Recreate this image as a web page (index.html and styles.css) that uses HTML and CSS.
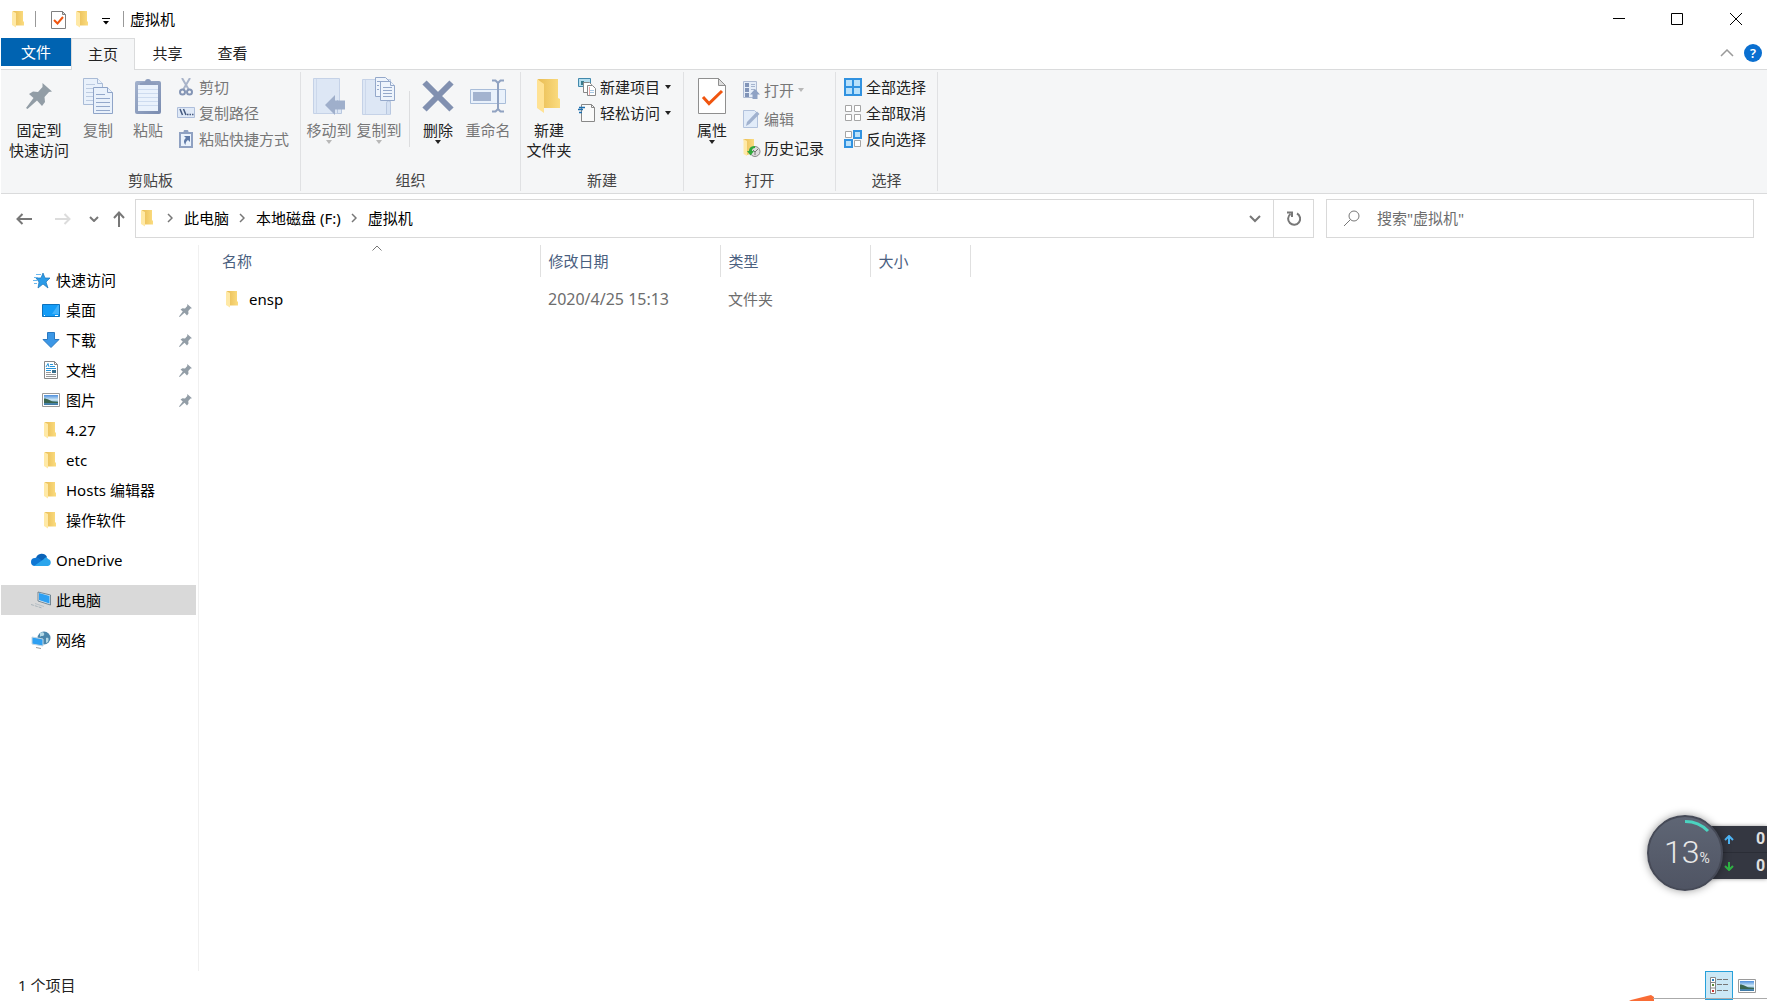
FILE: index.html
```html
<!DOCTYPE html>
<html lang="zh-CN">
<head>
<meta charset="utf-8">
<title>虚拟机</title>
<link rel="stylesheet" href="styles.css">
</head>
<body>
<svg class="defs" aria-hidden="true">
  <defs>
    <linearGradient id="gFold" x1="0" y1="0" x2="1" y2="0"><stop offset="0" stop-color="#e9bd55"/><stop offset="1" stop-color="#fbdc80"/></linearGradient>
    <linearGradient id="gSky" x1="0" y1="0" x2="0" y2="1"><stop offset="0" stop-color="#4e8fdc"/><stop offset=".5" stop-color="#d4ecf8"/><stop offset=".7" stop-color="#5a93ac"/><stop offset="1" stop-color="#3a77a8"/></linearGradient>
    <linearGradient id="gClip" x1="0" y1="0" x2="1" y2="1"><stop offset="0" stop-color="#a3b2cd"/><stop offset="1" stop-color="#7a8cb0"/></linearGradient>
    <linearGradient id="gBall" x1="0" y1="0" x2="0" y2="1"><stop offset="0" stop-color="#5f6675"/><stop offset="1" stop-color="#4f5463"/></linearGradient>
  </defs>
  <symbol id="folder" viewBox="0 0 18 18"><path d="M3 1H13v10.500h1V15.500H5z" fill="url(#gFold)"/><path d="M2 1l4 2v14.500L2 15z" fill="#ffe9a6"/></symbol>
  <symbol id="pin" viewBox="0 0 26 26"><path d="M16.500 0L26 8.500l-3 .5-4.500 5 .5 5-3 4-5-5.500L1.500 26 0 25 7.500 15 3 11l4-2.500 5 .5 4.500-5z" fill="#929da6"/></symbol>
  <symbol id="picture" viewBox="0 0 18 14"><path d="M.5.500h17v13H.500z" fill="#fff" stroke="#9a9a9a"/><path d="M2 2h14v10H2z" fill="url(#gSky)"/><path d="M2 5.500c4 0 6 2.500 9 3l5 .5v1H2z" fill="#3b6650"/></symbol>
  <symbol id="crumb" viewBox="0 0 6 10"><path d="M1 1l4 4-4 4" fill="none" stroke="#777" stroke-width="1.500"/></symbol>
</svg>

<header class="titlebar">
  <svg class="i18"><use href="#folder"/></svg>
  <span class="bar"></span>
  <button class="quick props" aria-label="属性"><svg width="15" height="18"><path d="M.5.500h11l3 3v14H.500z" fill="#fff" stroke="#808080"/><path d="M11.500.500v3h3z" fill="#ddd" stroke="#808080"/><path d="M3 9l3.500 3.500L12 6" fill="none" stroke="#f0550f" stroke-width="2"/></svg></button>
  <button class="quick" aria-label="新建文件夹"><svg class="i18"><use href="#folder"/></svg></button>
  <button class="quick more" aria-label="自定义快速访问工具栏"><svg width="8" height="7"><path d="M0 .5h8" stroke="#000"/><path d="M1 3h6L4 6.500z"/></svg></button>
  <span class="bar"></span>
  <h1>虚拟机</h1>
  <div class="wincontrols">
    <button aria-label="最小化"><svg width="12" height="12"><path d="M0 5.500h12" stroke="#000"/></svg></button>
    <button aria-label="最大化"><svg width="12" height="12"><path d="M.5.500h11v11H.500z" fill="none" stroke="#000"/></svg></button>
    <button aria-label="关闭"><svg width="12" height="12"><path d="M0 0l12 12M12 0L0 12" stroke="#000"/></svg></button>
  </div>
</header>

<nav class="tabs">
  <button class="tab file">文件</button>
  <button class="tab active">主页</button>
  <button class="tab">共享</button>
  <button class="tab">查看</button>
  <div class="help">
    <button aria-label="最小化功能区"><svg width="14" height="8"><path d="M1 7l6-6 6 6" fill="none" stroke="#9a9a9a" stroke-width="1.500"/></svg></button>
    <button class="ask" aria-label="帮助">?</button>
  </div>
</nav>

<section class="ribbon">
  <div class="group clip">
    <div class="tools">
      <button class="big wide"><span class="pic"><svg width="26" height="26"><use href="#pin"/></svg></span>固定到<br>快速访问</button>
      <button class="big" disabled><span class="pic"><svg width="30" height="36"><g fill="#e9f1fb" stroke="#a9bbd6"><path d="M.500.500h14l5 5v21H.500z"/><path d="M14.500.500v5h5"/><path d="M3 6.500h9M3 10.500h13M3 14.500h7M3 18.500h7M3 22.500h7" stroke="#bccbe1"/><path d="M10.500 9.500h14l5 5v21h-19z" stroke="#8fa4c8"/><path d="M24.500 9.500v5h5" stroke="#8fa4c8"/><path d="M13 16.500h9M13 20.500h14M13 24.500h14M13 28.500h14M13 32.500h14" stroke="#93a8cb"/></g></svg></span>复制</button>
      <button class="big" disabled><span class="pic"><svg width="26" height="36"><rect y="3" width="26" height="33" rx="2" fill="url(#gClip)"/><path d="M3 7h20v26H3z" fill="#eaf2fc"/><path d="M3 11.500h20M3 15.500h20M3 19.500h20M3 23.500h20M3 27.500h20" stroke="#cddbef"/><path d="M5 7V5l5-1a3 3 0 0 1 6 0l5 1v2z" fill="#8c9cbc"/></svg></span>粘贴</button>
      <div class="small">
        <button disabled><svg class="i18" viewBox="0 0 18 18"><path d="M5 0l7 12M13 0L6 12" stroke="#a9b4c9" stroke-width="2"/><g fill="none" stroke="#8495b5" stroke-width="2"><circle cx="5.500" cy="14" r="2.500"/><circle cx="12.500" cy="14" r="2.500"/></g></svg>剪切</button>
        <button disabled><svg class="i18" viewBox="0 0 18 18"><path d="M.5 3.500h17v10H.500z" fill="#dfe9f7" stroke="#aebedb"/><path d="M3 5l2.500 6M6.500 5L9 11M10 10.500h1.500M12.500 10.500H14M15 10.500h1.500" stroke="#44597f" stroke-width="1.500"/></svg>复制路径</button>
        <button disabled><svg class="i18" viewBox="0 0 18 18"><path d="M2 2h4.500a2.500 2.500 0 0 1 5 0H16v16H2z" fill="#8fa1c2"/><path d="M4 4h10v12H4z" fill="#eaf2fc"/><path d="M7 6h6v6l-2-2c-2 1-2.500 3-2.500 5C6 12 7 9.500 9 8z" fill="#5f7aa8"/></svg>粘贴快捷方式</button>
      </div>
    </div>
    <h2>剪贴板</h2>
  </div>

  <div class="group org">
    <div class="tools">
      <button class="big" disabled><span class="pic"><svg width="32" height="37"><path d="M.5.500h26v35H.500z" fill="#dde7f5" stroke="#c5d2e7"/><path d="M3.500 1v34" stroke="#ccd8eb"/><path d="M24.500 22v13.500h4V24" fill="#dde7f5" stroke="#b9c8e0"/><path d="M12 27l10-10v5.500h10v9H22V37z" fill="#9fafcb"/></svg></span>移动到<i class="arrow"></i></button>
      <button class="big" disabled><span class="pic"><svg width="34" height="38"><path d="M.5 2.500h28v35H.500z" fill="#dde7f5" stroke="#c5d2e7"/><path d="M3.500 3v34" stroke="#ccd8eb"/><path d="M24.500 37V26a2 2 0 0 1 4 0v11" fill="#d5e1f2" stroke="#b9c8e0"/><g fill="#eef4fc" stroke="#94a8ca"><path d="M13.500.500h10l4 4v15h-14z"/><path d="M18.500 4.500h10l4 4v15h-14z"/><path d="M28.500 4.500v4h4M21 10.500h9M21 13.500h9M21 16.500h9M21 19.500h9M15 4.500h4M15 8.500h2M15 12.500h2"/></g></svg></span>复制到<i class="arrow"></i></button>
      <span class="split"></span>
      <button class="big"><span class="pic"><svg width="32" height="32"><path d="M2.500 2.500l27 27M29.500 2.500l-27 27" stroke="#8190b0" stroke-width="6"/></svg></span>删除<i class="arrow"></i></button>
      <button class="big" disabled><span class="pic"><svg width="36" height="34"><path d="M.500 10.500h35v14H.500z" fill="#e9f1fb" stroke="#a9bdd9"/><path d="M3 13h18v9H3z" fill="#a3b3cf"/><path d="M22 1.500h3.500L28 4l2.500-2.500H34M28 3v27M22 32.500h3.500L28 30l2.500 2.500H34" fill="none" stroke="#90a2c1" stroke-width="2"/></svg></span>重命名</button>
    </div>
    <h2>组织</h2>
  </div>

  <div class="group create">
    <div class="tools">
      <button class="big"><span class="pic"><svg width="26" height="34"><path d="M2 0h20v19l2 1v9H8z" fill="url(#gFold)"/><path d="M1 0l7 5v29l-7-5z" fill="#ffe294"/></svg></span>新建<br>文件夹</button>
      <div class="small">
        <button><svg class="i18" viewBox="0 0 18 18"><path d="M.5.500h12v8H.500z" fill="#b5deef" stroke="#4289ac"/><path d="M3 3h3v4H3z" fill="#3a7b8d"/><path d="M5.500 4.500h6l2 2v8h-8z" fill="#fff" stroke="#888"/><path d="M9.500 7.500h5l3 3v7h-8z" fill="#fff" stroke="#888"/><path d="M11 12.500h5M11 14.500h5" stroke="#a8c8e4"/><path d="M11.500 9v8" stroke="#eaa"/></svg>新建项目<i class="arrow"></i></button>
        <button><svg class="i18" viewBox="0 0 18 18"><path d="M3.500.500h10l3 3v14h-13z" fill="#fafafa" stroke="#888"/><path d="M13.500.500v3h3" fill="none" stroke="#888"/><path d="M1 3.500h6M0 5.500h5M1 8.500h3" stroke="#1e6fae" stroke-width="1.500"/></svg>轻松访问<i class="arrow"></i></button>
      </div>
    </div>
    <h2>新建</h2>
  </div>

  <div class="group open">
    <div class="tools">
      <button class="big"><span class="pic"><svg width="28" height="36"><path d="M.5.500h20l7 7v28H.500z" fill="#fff" stroke="#8f8f8f"/><path d="M20.500.500v7h7z" fill="#ddd" stroke="#8f8f8f"/><path d="M5 19l6 6.500L24 13" fill="none" stroke="#f0550f" stroke-width="3"/></svg></span>属性<i class="arrow"></i></button>
      <div class="small loose">
        <button disabled><svg class="i18" viewBox="0 0 18 18"><path d="M.5.500h13v16H.500z" fill="#e5edf8" stroke="#aebbd3"/><path d="M2 2h4v4H2zM2 7h4v4H2zM2 12h4v4H2z" fill="#8194b8"/><path d="M8 3.500h4M8 5.500h4M8 8.500h4" stroke="#a5b4ce"/><path d="M12 8l5 5.500h-2.500V18h-5v-4.500H7z" fill="#8fa2c4"/></svg>打开<i class="arrow"></i></button>
        <button disabled><svg class="i18" viewBox="0 0 18 18"><path d="M.5.500h11l3 3v14H.500z" fill="#e2ecf9" stroke="#b2c2dc"/><path d="M3 16l1-4L14 1.500l2.500 2.500L6.500 14z" fill="#a1b2cf"/></svg>编辑</button>
        <button><svg class="i18" viewBox="0 0 18 18"><path d="M.500 0H11v14L4 16z" fill="url(#gFold)"/><path d="M.500 0L4 2v15L.500 15z" fill="#ffe9a6"/><circle cx="12" cy="12.500" r="5" fill="#ddd" stroke="#888"/><path d="M10 11l2 2 3-3M12 13v3" fill="none" stroke="#777"/><path d="M12 7c-5 0-6 3-6 5H4l3.500 4.500L11 12H9c0-2 1-3 3-3z" fill="#31a83c"/></svg>历史记录</button>
      </div>
    </div>
    <h2>打开</h2>
  </div>

  <div class="group choose">
    <div class="tools">
      <div class="small">
        <button><svg class="i18" viewBox="0 0 18 18"><path d="M1 1h16v16H1zM9 1v16M1 9h16" fill="#b9e1fb" stroke="#3192e0" stroke-width="2"/></svg>全部选择</button>
        <button><svg class="i18" viewBox="0 0 18 18"><path d="M1.500 1.500h6v6h-6zM10.500 1.500h6v6h-6zM1.500 10.500h6v6h-6zM10.500 10.500h6v6h-6z" fill="#fff" stroke="#a5a5a5"/></svg>全部取消</button>
        <button><svg class="i18" viewBox="0 0 18 18"><path d="M1.500 1.500h6v6h-6zM10.500 10.500h6v6h-6z" fill="#fff" stroke="#a5a5a5"/><path d="M10 1h7v7h-7zM1 10h7v7H1z" fill="#b9e1fb" stroke="#3192e0" stroke-width="2"/></svg>反向选择</button>
      </div>
    </div>
    <h2>选择</h2>
  </div>
</section>

<div class="address">
  <div class="history">
    <button aria-label="后退"><svg width="16" height="12"><path d="M16 6H1.500M6.500 1L1.500 6l5 5" fill="none" stroke="#777" stroke-width="2"/></svg></button>
    <button class="fwd" aria-label="前进" disabled><svg width="16" height="12"><path d="M0 6h14.500M9.500 1l5 5-5 5" fill="none" stroke="#dcdcdc" stroke-width="2"/></svg></button>
    <button class="recent" aria-label="最近位置"><svg width="10" height="6"><path d="M1 1l4 4 4-4" fill="none" stroke="#777" stroke-width="2"/></svg></button>
    <button aria-label="上移"><svg width="12" height="16"><path d="M6 16V1.500M1 7l5-5.500L11 7" fill="none" stroke="#777" stroke-width="2"/></svg></button>
  </div>
  <div class="path">
    <nav class="crumbs">
      <svg class="i18"><use href="#folder"/></svg>
      <svg class="sep"><use href="#crumb"/></svg><a href="#">此电脑</a>
      <svg class="sep"><use href="#crumb"/></svg><a href="#">本地磁盘 (F:)</a>
      <svg class="sep"><use href="#crumb"/></svg><a href="#">虚拟机</a>
    </nav>
    <button class="drop" aria-label="以前的位置"><svg width="12" height="8"><path d="M1 1l5 5 5-5" fill="none" stroke="#777" stroke-width="2"/></svg></button>
    <button class="refresh" aria-label="刷新"><svg width="14" height="15"><path d="M10 2.500A6 6 0 1 1 3.500 3M0 1.500h5V6" fill="none" stroke="#777" stroke-width="2"/></svg></button>
  </div>
  <label class="search">
    <svg width="16" height="16"><circle cx="10" cy="6" r="5" fill="none" stroke="#777"/><path d="M6.500 9.500L0 16" stroke="#777"/></svg>
    <input type="text" aria-label="搜索" placeholder="搜索&quot;虚拟机&quot;">
  </label>
</div>

<main>
  <nav class="side">
    <a href="#" class="root"><svg class="i18" viewBox="0 0 18 18"><path d="M10 2l2 5h5l-4 4 2 6-5-4-5 4 1-6-3-4h5z" fill="#2b9be8" stroke="#1873b8" stroke-width=".7"/><path d="M3 3.500h5M1 6.500h4M0 9.500h4M1 12.500h3" stroke="#6bb8ee"/></svg>快速访问</a>
    <a href="#"><svg class="i18" viewBox="0 0 18 18"><path d="M.5 3.500h17v12H.500z" fill="#139cf7" stroke="#0d72bd"/><path d="M10 13L16 4h1v9z" fill="#42b2fb"/><path d="M2 14.500h1M13 14.500h3" stroke="#fff"/></svg>桌面<svg class="mark"><use href="#pin"/></svg></a>
    <a href="#"><svg class="i18" viewBox="0 0 18 18"><path d="M5.500 1.500h7v7h4.500L9 16.500 1 8.500h4.500z" fill="#3b97e6" stroke="#2a78c0"/></svg>下载<svg class="mark"><use href="#pin"/></svg></a>
    <a href="#"><svg class="i18" viewBox="0 0 18 18"><path d="M2.500.500h10l3 3v14h-13z" fill="#fff" stroke="#888"/><path d="M12.500.500v3h3" fill="none" stroke="#888"/><path d="M4 6l2-3.500L7 6M8 3.500h3M8 5.500h5M4 7.500h10M4 9.500h5" fill="none" stroke="#2894d8"/><path d="M4 11.500h5M4 13.500h10M4 15.500h10" stroke="#999"/><path d="M10 9h4v3h-4z" fill="#386e8c"/></svg>文档<svg class="mark"><use href="#pin"/></svg></a>
    <a href="#"><svg class="i18" viewBox="0 0 18 14"><use href="#picture"/></svg>图片<svg class="mark"><use href="#pin"/></svg></a>
    <a href="#"><svg class="i18"><use href="#folder"/></svg>4.27</a>
    <a href="#"><svg class="i18"><use href="#folder"/></svg>etc</a>
    <a href="#"><svg class="i18"><use href="#folder"/></svg>Hosts 编辑器</a>
    <a href="#"><svg class="i18"><use href="#folder"/></svg>操作软件</a>
    <a href="#" class="root top"><svg class="i20" viewBox="0 0 20 18"><path d="M5 7a6 6 0 0 1 11-1l-4 6z" fill="#0a63b8"/><path d="M4 15a4 4 0 0 1 0-8c3-1 6 1 9 5l-3 3z" fill="#0f77d4"/><path d="M3 15l10-7c1-2 3-2 4 0a3.600 3.600 0 0 1 0 7z" fill="#2ba5ec"/></svg>OneDrive</a>
    <a href="#" class="root top on"><svg class="i20" viewBox="0 0 20 18"><path d="M7 1l12.500 3v10L7 10z" fill="#dce9f2" stroke="#5b7180" stroke-width=".8"/><path d="M8 2l10.500 3v7.500L8 9z" fill="#2ea0f2"/><path d="M0 13.500l11 3.500" stroke="#a9b4bb" stroke-dasharray="3 1"/><path d="M4 12.500l9 3" stroke="#b9c2c8"/></svg>此电脑</a>
    <a href="#" class="root top"><svg class="i20" viewBox="0 0 20 18"><circle cx="13" cy="7" r="6.500" fill="#4b86ab"/><path d="M9 2c3-2 5 0 4 2s-3 0-4 2zM15 7c3-1 3 1 2 4l-2 1z" fill="#b4d9e6"/><path d="M1 6l11 2v7L1 13z" fill="#2ea0f2" stroke="#c4d6e2"/><path d="M5 16.500l5 1" stroke="#999"/></svg>网络</a>
  </nav>

  <section class="files">
    <table>
      <colgroup><col class="c1"><col class="c2"><col class="c3"><col class="c4"></colgroup>
      <thead><tr><th>名称<svg class="sort" width="10" height="6"><path d="M.5 5.500L5 1l4.500 4.500" fill="none" stroke="#777"/></svg></th><th>修改日期</th><th>类型</th><th>大小</th></tr></thead>
      <tbody><tr><td><span class="name"><svg class="i18"><use href="#folder"/></svg>ensp</span></td><td class="date">2020/4/25 15:13</td><td>文件夹</td><td></td></tr></tbody>
    </table>
  </section>
</main>

<footer>
  <span>1 个项目</span>
  <div class="views">
    <button class="on" aria-label="详细信息"><svg width="18" height="17"><path d="M.5.500h5v16h-5zM.500 5.500h5M.500 11h5" fill="#fff" stroke="#888"/><path d="M2 2h2v2H2z" fill="#2a7fc0"/><path d="M2 7h2v2H2z" fill="#5b8a3a"/><path d="M2 13h2v2H2z" fill="#c33"/><path d="M7 2.500h5M13 2.500h5M7 7.500h5M13 7.500h5M7 13.500h5M13 13.500h5" stroke="#777"/></svg></button>
    <button aria-label="大缩略图"><svg width="18" height="14"><use href="#picture"/></svg></button>
  </div>
</footer>

<svg class="peek" width="138" height="6" aria-hidden="true"><path d="M0 6l2-1L22 0l3 2v4z" fill="#f96c35"/><path d="M24 3.500h114" stroke="#aaa"/></svg>

<aside class="meter">
  <div class="rates">
    <div><svg width="10" height="9"><path d="M5 9V2M1 5l4-4 4 4" fill="none" stroke="#4db5f5" stroke-width="2"/></svg><b>0</b></div>
    <div><svg width="10" height="9"><path d="M5 0v7M1 4l4 4 4-4" fill="none" stroke="#2fb344" stroke-width="2"/></svg><b>0</b></div>
  </div>
  <div class="ball">
    <svg width="76" height="76"><circle cx="38" cy="38" r="37" fill="url(#gBall)" stroke="#464a57" stroke-width="2"/><path d="M38 6.500A32 32 0 0 1 61 16" fill="none" stroke="#4bd3c0" stroke-width="3"/></svg>
    <p>13<small>%</small></p>
  </div>
</aside>
</body>
</html>
```
FILE: styles.css
```css
* { box-sizing: border-box; }

body {
  margin: 0;
  padding-left: 1px;
  height: 100vh;
  display: flex;
  flex-direction: column;
  position: relative;
  overflow: hidden;
  background: #fff;
  color: #000;
  font: 15px/20px "Noto Sans", "Noto Sans CJK SC", sans-serif;
}

button {
  display: flex;
  align-items: center;
  justify-content: center;
  padding: 0;
  border: 0;
  background: none;
  color: inherit;
  font: inherit;
}

a { color: inherit; text-decoration: none; }
h1, h2, p { margin: 0; font-size: 15px; font-weight: 400; }
svg { flex: none; display: block; }
.defs { position: absolute; width: 0; height: 0; }
.i18 { width: 18px; height: 18px; }
.i20 { width: 20px; height: 18px; }

/* title bar */
.titlebar { display: flex; align-items: center; height: 38px; padding-left: 9px; }
.bar { width: 1px; height: 16px; margin-left: 7px; background: #999; }
.quick.props { margin: 2px 8px 0 15px; }
.quick.more { margin: 4px 6px 0 10px; }
.titlebar h1 { margin-left: 6px; }
.wincontrols { display: flex; margin-left: auto; padding-right: 1px; }
.wincontrols button { width: 58px; height: 38px; }
.wincontrols button:last-child { width: 60px; }

/* ribbon tabs */
.tabs { display: flex; height: 32px; border-bottom: 1px solid #dadbdc; color: #222; }
.tab { width: 65px; height: 30px; }
.tab.file { width: 70px; height: 28px; background: #0063b1; color: #fff; }
.tab.active { width: 64px; height: 32px; padding-bottom: 2px; border: 1px solid #dadbdc; border-bottom: 0; background: #f5f6f7; }
.help { display: flex; gap: 10px; align-items: center; height: 30px; margin-left: auto; padding-right: 5px; }
.help .ask { width: 18px; height: 18px; border-radius: 50%; background: #0a6fd0; color: #fff; font-weight: 600; font-size: 13px; }

/* ribbon */
.ribbon { display: flex; height: 124px; padding: 2px 0; background: #f5f6f7; border-bottom: 1px solid #dadbdc; color: #222; }
.group { display: flex; flex-direction: column; justify-content: space-between; border-right: 1px solid #e0e1e3; }
.group h2 { height: 21px; color: #444; text-align: center; }
.clip { width: 300px; }
.org { width: 220px; }
.create { width: 163px; }
.open { width: 152px; }
.choose { width: 102px; }
.tools { display: flex; align-items: flex-start; }
.big { display: block; width: 50px; text-align: center; white-space: nowrap; }
.big .pic { display: flex; align-items: center; justify-content: center; height: 48px; }
.big.wide { width: 68px; margin-left: 4px; }
.ribbon button:disabled { color: #777; }
.arrow { width: 0; border: 3px solid transparent; border-top: 4px solid #222; border-bottom: 0; }
.big .arrow { display: block; margin: 0 auto; }
.ribbon button:disabled .arrow { border-top-color: #b8b8b8; }
.small { display: flex; flex-direction: column; gap: 6px; padding-top: 5px; }
.small button { justify-content: flex-start; gap: 4px; height: 20px; white-space: nowrap; }
.small .arrow { margin-left: 1px; }
.small.loose { gap: 9px; padding-top: 8px; }
.small.loose button { gap: 3px; }
.clip .small { padding-left: 4px; }
.org .tools { padding-left: 3px; }
.split { width: 1px; height: 56px; margin: 19px 3px 0 5px; background: #dcdddf; }
.create .tools { padding-left: 3px; }
.create .small { padding-left: 4px; }
.open .tools { padding-left: 3px; }
.open .small { padding-left: 6px; }
.choose .small { padding-left: 8px; }

/* address bar */
.address { display: flex; height: 51px; padding: 5px 13px 7px 0; }
.history { display: flex; width: 134px; padding-left: 15px; }
.history .fwd { margin-left: 23px; }
.history .recent { margin: 0 14px 0 18px; }
.path { flex: 1 1 0; display: flex; border: 1px solid #d9d9d9; }
.crumbs { display: flex; flex: 1; align-items: center; padding: 0 0 1px 3px; }
.crumbs .sep { width: 6px; height: 10px; margin: 0 11px 0 10px; }
.drop { width: 36px; }
.refresh { width: 40px; border-left: 1px solid #d9d9d9; }
.search { display: flex; align-items: center; gap: 17px; width: 428px; margin-left: 12px; padding: 0 0 1px 17px; border: 1px solid #d9d9d9; }
.search input { flex: 1; min-width: 0; padding: 0; border: 0; outline: 0; background: none; font: inherit; }
.search input::placeholder { color: #6d6d6d; opacity: 1; }

/* body */
main { display: flex; flex: 1; min-height: 0; }
.side { width: 198px; padding-top: 20px; border-right: 1px solid #f0f0f0; }
.side a { display: flex; align-items: center; gap: 6px; width: 195px; height: 30px; padding-left: 41px; }
.side .root { padding-left: 32px; }
.side .root .i18 { margin-right: -1px; }
.side .top { margin-top: 10px; padding-left: 30px; gap: 5px; }
.side .on { background: #d9d9d9; }
.mark { width: 13px; height: 13px; margin-left: auto; margin-right: 4px; }
.files { flex: 1; }
table { table-layout: fixed; width: 771px; border-collapse: collapse; }
.c1 { width: 341px; }
.c2 { width: 180px; }
.c3 { width: 150px; }
.c4 { width: 100px; }
th { position: relative; height: 32px; padding: 0 0 1px 8px; border-right: 1px solid #e0e0e0; color: #4a607f; font-weight: 400; text-align: left; }
th:first-child { padding-left: 23px; }
.sort { position: absolute; top: 0; left: 50%; margin-left: 3px; }
td { height: 44px; padding: 0 0 0 8px; color: #6d6d6d; }
td:first-child { padding-left: 25px; color: #000; }
.date { font-size: 16px; }
.name { display: flex; align-items: center; gap: 7px; }

/* status bar */
footer { display: flex; justify-content: space-between; height: 30px; padding-left: 17px; line-height: 28px; color: #222; }
.views { display: flex; padding-right: 6px; }
.views button { width: 28px; height: 29px; }
.views .on { border: 1px solid #26a0da; background: #cbe8f6; }
.peek { position: absolute; right: 0; bottom: 0; }

/* floating traffic meter */
.meter { position: absolute; right: 0; bottom: 108px; width: 120px; height: 78px; }
.rates { position: absolute; right: 0; top: 11px; width: 60px; background: #343741; box-shadow: 0 0 4px #0006; overflow: hidden; }
.rates div { display: flex; align-items: center; width: 60px; height: 26px; padding-left: 17px; gap: 22px; color: #e0e0e0; }
.rates div + div { height: 27px; border-top: 1px solid #2a2d36; }
.rates b { font: 700 16px/20px Roboto, sans-serif; }
.ball { position: absolute; left: 0; top: 0; width: 76px; height: 76px; border-radius: 50%; box-shadow: 0 0 8px #0006; }
.ball p { position: absolute; inset: 0; padding-left: 4px; color: #e8e8e8; font: 300 32px/74px Roboto, sans-serif; text-align: center; }
.ball small { font-size: 14px; font-weight: 400; }
```
